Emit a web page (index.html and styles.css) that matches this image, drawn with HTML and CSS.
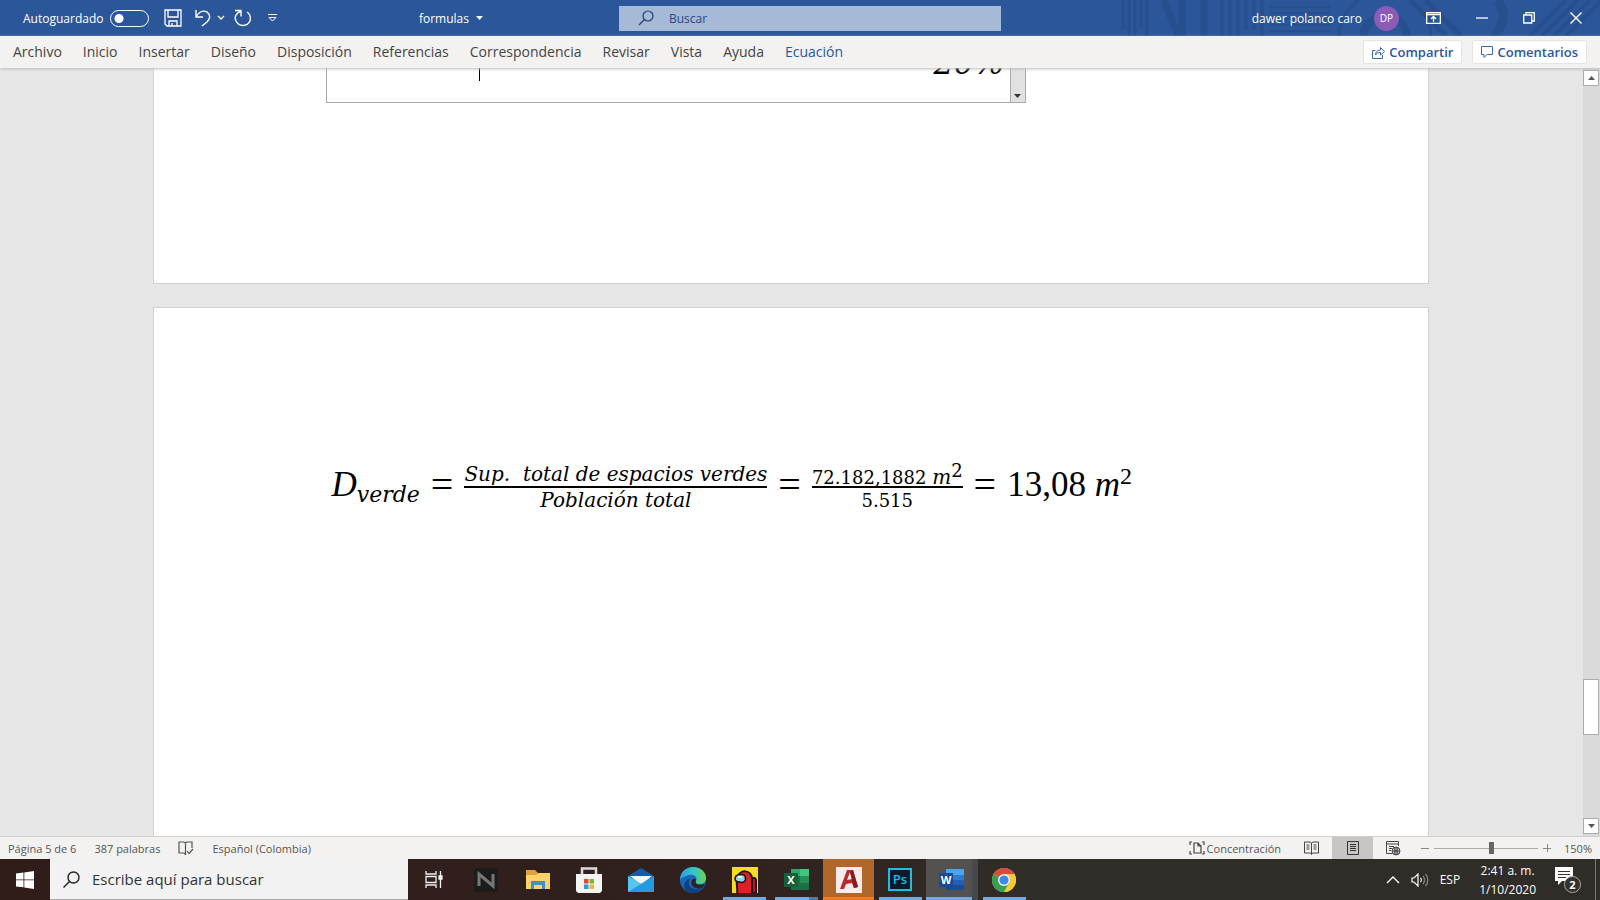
FILE: index.html
```html
<!DOCTYPE html>
<html lang="es">
<head>
  <meta charset="UTF-8">
  <meta name="viewport" content="width=device-width, initial-scale=1.0">
  <title>formulas - Word</title>
  <link rel="stylesheet" href="styles.css">
</head>
<body>
  <header class="titlebar">
    <svg class="titlebar-art" width="500" height="36" viewBox="0 0 500 36" fill="none" stroke="#264f8d" aria-hidden="true">
      <path stroke-width="3" d="M23 0v30M29 0v36M35 0v36M41 0v28M47 0v36M122 0v36M130 0v36M138 0v36M146 0v30M154 0v30M162 0v36"/>
      <path stroke-width="7" d="M64 0l14 36M82 0v36M104 0v36"/>
      <path stroke-width="2" d="M170 7h60M170 13h60M170 19h60M170 25h60M170 31h60"/>
      <circle cx="285" cy="38" r="22" stroke-width="8"/>
      <circle cx="285" cy="38" r="46" stroke-width="3"/>
      <path stroke-width="5" d="M310 0l36 36M325 0l36 36"/>
      <path stroke-width="9" d="M397 0c10 12 8 24-4 36"/>
      <path stroke-width="4" d="M430 36l36-36M442 36l36-36M454 36l36-36M466 36l36-36"/>
    </svg>
    <div class="quick">
      <label class="autosave">Autoguardado <input type="checkbox" class="switch"></label>
      <button class="icon-btn save" aria-label="Guardar">
        <svg width="18" height="18" viewBox="0 0 18 18" fill="none" stroke="#fff" stroke-width="1.3"><path d="M1 1h16v16H3l-2-2zM4 1v7h10V1M5 17v-5h8v5M8 17v-3"/></svg>
      </button>
      <button class="icon-btn undo" aria-label="Deshacer">
        <svg width="16" height="18" viewBox="0 0 16 18" fill="none" stroke="#fff" stroke-width="1.4"><path d="M1 1v7h7M1 8C4 3 8 1 12 3c4 3 3 7 0 10l-5 4"/></svg>
      </button>
      <button class="icon-btn" aria-label="Opciones de deshacer">
        <svg width="8" height="6" viewBox="0 0 8 6" fill="none" stroke="#fff" stroke-width="1.3"><path d="M1 1l3 3 3-3"/></svg>
      </button>
      <button class="icon-btn redo" aria-label="Rehacer">
        <svg width="18" height="18" viewBox="0 0 18 18" fill="none" stroke="#fff" stroke-width="1.4"><path d="M1 1.500h6v6M7 2C2 4 0 8 2 12c3 6 11 6 14 0 1-4 0-7-3-9"/></svg>
      </button>
      <button class="icon-btn more" aria-label="Personalizar barra">
        <svg width="9" height="8" viewBox="0 0 9 8" fill="none" stroke="#fff"><path d="M0 .5h9M1 3.500h7L4.500 7z"/></svg>
      </button>
      <button class="doc-name">formulas
        <svg width="7" height="4" viewBox="0 0 7 4" fill="#fff"><path d="M0 0h7L3.500 4z"/></svg>
      </button>
    </div>
    <label class="search">
      <svg width="16" height="16" viewBox="0 0 16 16" fill="none" stroke="#1f3f77" stroke-width="1.200"><circle cx="10" cy="6" r="5"/><path d="M6.500 9.500L1 15"/></svg>
      <input type="text" placeholder="Buscar" aria-label="Buscar">
    </label>
    <div class="window-tools">
      <span class="user">dawer polanco caro</span>
      <span class="avatar">DP</span>
      <button class="icon-btn" aria-label="Opciones de la cinta">
        <svg width="15" height="12" viewBox="0 0 15 12" fill="none" stroke="#fff" stroke-width="1.300"><path d="M.7.700h13.600v10.600H.7zM.7 2.500h13.600M7.500 10V4.500M5 7l2.500-2.500L10 7"/></svg>
      </button>
      <button class="icon-btn" aria-label="Minimizar">
        <svg width="12" height="12" viewBox="0 0 12 12" stroke="#fff" stroke-width="1.300"><path d="M0 6h12"/></svg>
      </button>
      <button class="icon-btn" aria-label="Restaurar">
        <svg width="12" height="12" viewBox="0 0 12 12" fill="none" stroke="#fff" stroke-width="1.300"><path d="M.7 3h8v8h-8zM3 3V.7h8.300V9H9"/></svg>
      </button>
      <button class="icon-btn" aria-label="Cerrar">
        <svg width="12" height="12" viewBox="0 0 12 12" stroke="#fff" stroke-width="1.400"><path d="M.5.500l11 11M11.500.500l-11 11"/></svg>
      </button>
    </div>
  </header>

  <nav class="ribbon">
    <a href="#">Archivo</a>
    <a href="#">Inicio</a>
    <a href="#">Insertar</a>
    <a href="#">Diseño</a>
    <a href="#">Disposición</a>
    <a href="#">Referencias</a>
    <a href="#">Correspondencia</a>
    <a href="#">Revisar</a>
    <a href="#">Vista</a>
    <a href="#">Ayuda</a>
    <a href="#" class="active">Ecuación</a>
    <div class="ribbon-actions">
      <button>
        <svg width="13" height="13" viewBox="0 0 13 13" fill="none" stroke="#3c66a8"><path d="M3.500 4.500h-3v8h10V9M3.500 9c0-3 2-5 5-5V1.500l4 4-4 3.500V6.500C6 6.500 5 7 3.500 9z"/></svg>
        Compartir
      </button>
      <button>
        <svg width="12" height="12" viewBox="0 0 12 12" fill="none" stroke="#3c66a8"><path d="M.5.500h11v8H6l-3 3v-3H.5z"/></svg>
        Comentarios
      </button>
    </div>
  </nav>

  <main class="workspace">
    <div class="pages">
      <section class="page page-end">
        <div class="equation-box">
          <span class="caret"></span>
          <span class="percent">20%</span>
          <button class="equation-menu" aria-label="Opciones de ecuación">
            <svg width="7" height="4" viewBox="0 0 7 4" fill="#333"><path d="M0 0h7L3.500 4z"/></svg>
          </button>
        </div>
      </section>
      <section class="page page-next">
        <div class="equation">
          <span class="term"><i>D</i><i class="sub">verde</i></span>
          <span class="equals">=</span>
          <span class="fraction">
            <span class="top"><i>Sup.&nbsp; total de espacios verdes</i></span>
            <span class="bottom"><i>Población total</i></span>
          </span>
          <span class="equals">=</span>
          <span class="fraction">
            <span class="top">72.182,1882 <i>m</i><span class="sup">2</span></span>
            <span class="bottom">5.515</span>
          </span>
          <span class="equals">=</span>
          <span class="term">13,08 <i>m</i><span class="sup">2</span></span>
        </div>
      </section>
    </div>
    <div class="scrollbar">
      <button aria-label="Subir"><svg width="7" height="4" viewBox="0 0 7 4" fill="#555"><path d="M0 4h7L3.500 0z"/></svg></button>
      <div class="track-above"></div>
      <div class="thumb"></div>
      <div class="track-below"></div>
      <button aria-label="Bajar"><svg width="7" height="4" viewBox="0 0 7 4" fill="#555"><path d="M0 0h7L3.500 4z"/></svg></button>
    </div>
  </main>

  <footer class="statusbar">
    <span>Página 5 de 6</span>
    <span>387 palabras</span>
    <svg width="16" height="14" viewBox="0 0 16 14" fill="none" stroke="#555" stroke-width="1.200"><path d="M7.500 2v11.500L6 12H1V1h5l1.500 1L9 1h5v6M9 10l2 2.500L15 8"/></svg>
    <span>Español (Colombia)</span>
    <div class="view-tools">
      <button class="focus-btn">
        <svg width="16" height="14" viewBox="0 0 16 14" fill="none" stroke="#444" stroke-width="1.200"><path d="M3 1H1v3M1 10v3h2M13 1h2v3M15 10v3h-2M5 2h4l3 3v7H5zM9 2v3h3"/></svg>
        Concentración
      </button>
      <button class="view-btn" aria-label="Modo de lectura">
        <svg width="15" height="14" viewBox="0 0 15 14" fill="none" stroke="#444"><path d="M7.500 2v11.500M7.500 2L6 1H.5v11H6l1.500 1L9 12h5.500V1H9zM2.500 4h3M2.500 6h3M2.500 8h3M9.500 4h3M9.500 6h3M9.500 8h3"/></svg>
      </button>
      <button class="view-btn selected" aria-label="Diseño de impresión">
        <svg width="12" height="14" viewBox="0 0 12 14" fill="none" stroke="#333"><path d="M.5.500h11v13H.5zM3 3.500h6M3 5.500h6M3 7.500h6M3 9.500h6"/></svg>
      </button>
      <button class="view-btn" aria-label="Diseño web">
        <svg width="15" height="15" viewBox="0 0 15 15" fill="none" stroke="#444"><path d="M6 12.500H.5V.5h12V5M.5 3h12M3 5.500h5M3 7.500h3M3 9.500h2"/><circle cx="10" cy="10" r="4" fill="#ccc"/><path d="M6 10h8M10 6v8M8 7c1 2 1 4 0 6M12 7c-1 2-1 4 0 6"/></svg>
      </button>
      <button class="zoom-btn" aria-label="Alejar"><svg width="8" height="8" viewBox="0 0 8 8" stroke="#888"><path d="M0 4.500h8"/></svg></button>
      <input type="range" class="zoom" min="0" max="100" value="56" aria-label="Zoom">
      <button class="zoom-btn" aria-label="Acercar"><svg width="8" height="8" viewBox="0 0 8 8" stroke="#888"><path d="M0 4.500h8M4.500 0v8"/></svg></button>
      <span class="zoom-value">150%</span>
    </div>
  </footer>

  <div class="taskbar">
    <button class="start" aria-label="Inicio">
      <svg width="18" height="18" viewBox="0 0 18 18" fill="#fff"><path d="M0 2.500l7.500-1v7H0zM8.300 1.400L18 0v8.500H8.300zM0 9.300h7.500v7L0 15.400zM8.300 9.300H18V18l-9.700-1.500z"/></svg>
    </button>
    <label class="task-search">
      <svg width="17" height="17" viewBox="0 0 17 17" fill="none" stroke="#222" stroke-width="1.400"><circle cx="10.500" cy="6.500" r="5.500"/><path d="M6.500 10.500L.5 16.500"/></svg>
      <input type="text" placeholder="Escribe aquí para buscar" aria-label="Escribe aquí para buscar">
    </label>
    <div class="apps">
      <button aria-label="Vista de tareas">
        <svg width="18" height="17" viewBox="0 0 18 17" fill="none" stroke="#eee" stroke-width="1.300"><path d="M1 0v3h10V0M1 17v-3h10v3M1 5.500h10v6H1zM15.500 0v17"/><path fill="#eee" d="M14 5h3v3h-3z"/></svg>
      </button>
      <button aria-label="Nox">
        <svg width="24" height="24" viewBox="0 0 24 24"><rect width="24" height="24" rx="3" fill="#1d1c1c"/><path d="M5 18V6l14 12V6" fill="none" stroke="#777" stroke-width="3"/></svg>
      </button>
      <button aria-label="Explorador de archivos">
        <svg width="24" height="22" viewBox="0 0 24 22"><path fill="#e0a136" d="M0 1h9l3 3h12v6H0z"/><path fill="#fbd267" d="M0 6h10l3-2h11v16H0z"/><path fill="#3f8ecd" d="M5 20v-8h14v8h-3v-4H8v4z"/></svg>
      </button>
      <button aria-label="Microsoft Store">
        <svg width="26" height="26" viewBox="0 0 26 26"><path d="M6 8V1.500h14V8" fill="none" stroke="#ddd" stroke-width="2.500"/><path fill="#f4f4f4" d="M0 7h26v17l-2 2H2l-2-2z"/><path fill="#d9512c" d="M8 12h4.500v4.500H8z"/><path fill="#7db72f" d="M13.500 12H18v4.500h-4.500z"/><path fill="#2a9ddb" d="M8 17.500h4.500V22H8z"/><path fill="#f0b82d" d="M13.500 17.500H18V22h-4.500z"/></svg>
      </button>
      <button aria-label="Correo">
        <svg width="26" height="24" viewBox="0 0 26 24"><path fill="#145ca7" d="M0 8L13 0l13 8-13 9z"/><path fill="#f2f8fc" d="M2 8h22L13 17z"/><path fill="#2d9fdf" d="M0 8l13 8 13-8v16H0z"/><path fill="#56c5f3" d="M0 8l26 16H0z"/><path fill="#249ae0" d="M0 24l26-16v16z"/></svg>
      </button>
      <button aria-label="Edge">
        <svg width="26" height="26" viewBox="0 0 26 26">
          <defs><linearGradient id="edge-top" x1="0" y1="0" x2="1" y2="0"><stop offset="0" stop-color="#2e9fe0"/><stop offset=".5" stop-color="#35c1cd"/><stop offset="1" stop-color="#67d650"/></linearGradient></defs>
          <circle cx="13" cy="13" r="13" fill="#1769b7"/>
          <path fill="url(#edge-top)" d="M0 13C0 5 6 0 13 0c8 0 13 5 13 11 0 4-3 6-6 6-3 0-5-1-4-3 3-5-5-8-10-5C3 10 1 11 0 13z"/>
          <path fill="#123f80" d="M10 12c-3 5 0 10 6 10 3 0 5-1 7-2-4 7-12 8-18 3-2-6 0-10 5-11z"/>
          <path fill="#302220" d="M16 13c-2 4 2 6 9 4-1 2-2 3-3 4-7 2-13-3-10-8 1-1 3-2 4 0z"/>
        </svg>
      </button>
      <button class="running" aria-label="Among Us">
        <svg width="26" height="26" viewBox="0 0 26 26"><path fill="#f5dc28" d="M0 0h26v26H0z"/><path fill="#b71920" stroke="#241017" stroke-width="2" d="M16 11h6q2 0 2 3v12h-8z"/><path fill="#df2028" stroke="#241017" stroke-width="2" d="M5 27c1-5-1-10 0-16 2-9 15-9 15 1v15z"/><path fill="#9ad2e5" stroke="#241017" stroke-width="1.600" d="M4 9c2-2 8-2 9 0 2 6-2 7-6 6-4 0-5-3-3-6z"/><path fill="#fff" d="M6 9h4v2H6z"/></svg>
      </button>
      <button class="running grouped" aria-label="Excel">
        <svg width="26" height="24" viewBox="0 0 26 24"><path fill="#1c7044" d="M7 1h18v21H7z"/><path fill="#2fa66a" d="M7 1h9v7H7z"/><path fill="#43c481" d="M16 1h9v7h-9z"/><path fill="#279057" d="M16 8h9v7h-9z"/><path fill="#146039" d="M0 5h14v14H0z"/><text x="7" y="16" class="tile-letter">X</text></svg>
      </button>
      <button class="running autocad" aria-label="AutoCAD">
        <svg width="26" height="26" viewBox="0 0 26 26"><path fill="#f8ece8" d="M0 0h26v26H0z"/><path fill="#b62a30" d="M4 22L11 3h6l5 17-4 1-2-5-6 1-2 5zM11 13l5-1-2-7z"/><path fill="#811c23" d="M14 5l3-2 5 17-4 1z"/></svg>
      </button>
      <button class="running" aria-label="Photoshop">
        <svg width="24" height="23" viewBox="0 0 24 23"><path fill="#071b2a" stroke="#20bce8" stroke-width="2" d="M1 1h22v21H1z"/><text x="12" y="16" class="ps-letters">Ps</text></svg>
      </button>
      <button class="running current" aria-label="Word">
        <svg width="26" height="24" viewBox="0 0 26 24"><path fill="#1a4c9c" d="M7 1h18v21H7z"/><path fill="#49a6ec" d="M7 1h18v6H7z"/><path fill="#2e7bd0" d="M7 7h18v5H7z"/><path fill="#225fb6" d="M7 12h18v5H7z"/><path fill="#194b98" d="M0 5h14v14H0z"/><text x="7" y="16" class="tile-letter">W</text></svg>
      </button>
      <button class="running" aria-label="Chrome">
        <svg width="24" height="24" viewBox="0 0 24 24"><circle cx="12" cy="12" r="12" fill="#f6c936"/><path fill="#d94b3d" d="M12 12L1.600 6A12 12 0 0 1 22.400 6z"/><path fill="#35a153" d="M12 12L1.600 6A12 12 0 0 0 12 24l5-9z"/><path fill="#f6c936" d="M12 6h10.400A12 12 0 0 1 12 24l5.500-9z"/><circle cx="12" cy="12" r="6" fill="#f4f4f4"/><circle cx="12" cy="12" r="4.600" fill="#4386e8"/></svg>
      </button>
    </div>
    <div class="tray">
      <button aria-label="Mostrar iconos ocultos"><svg width="14" height="9" viewBox="0 0 14 9" fill="none" stroke="#fff" stroke-width="1.400"><path d="M1 8l6-6 6 6"/></svg></button>
      <button aria-label="Volumen"><svg width="18" height="14" viewBox="0 0 18 14" fill="none" stroke="#fff" stroke-width="1.200"><path d="M1 5h2l4-4v12L3 9H1zM9.500 5c1 1 1 3 0 4"/><path stroke="#8b8985" d="M12 3c2 2 2 6 0 8M14.500 1c3 3 3 9 0 12"/></svg></button>
      <button>ESP</button>
      <time class="clock">2:41 a. m.<br>1/10/2020</time>
      <button class="notifications" aria-label="Notificaciones">
        <svg width="18" height="18" viewBox="0 0 18 18"><path fill="#fff" d="M0 0h18v14H7l-4 4v-4H0z"/><path stroke="#35302c" d="M3 4.500h12M3 7.500h12M3 10.500h8"/></svg>
        <span class="badge">2</span>
      </button>
    </div>
  </div>
</body>
</html>
```
FILE: styles.css
```css
* {
  box-sizing: border-box;
}
body {
  margin: 0;
  height: 100vh;
  display: flex;
  flex-direction: column;
  overflow: hidden;
  font-family: "Open Sans", "Noto Sans", sans-serif;
  font-size: 13px;
}
button {
  display: flex;
  align-items: center;
  justify-content: center;
  padding: 0;
  border: none;
  background: none;
  color: inherit;
  font: inherit;
}
svg {
  display: block;
  flex-shrink: 0;
}
input {
  font: inherit;
}

/* Title bar */
.titlebar {
  position: relative;
  flex: 0 0 36px;
  display: grid;
  grid-template-columns: 619fr 382fr 599fr;
  align-items: center;
  background: #2b579a;
  color: #fff;
  font-size: 12px;
}
.titlebar-art {
  position: absolute;
  top: 0;
  right: 0;
}
.quick {
  display: flex;
  align-items: center;
  padding-left: 23px;
}
.autosave {
  display: flex;
  align-items: center;
  gap: 7px;
}
.switch {
  appearance: none;
  width: 39px;
  height: 17px;
  margin: 0;
  border: 1px solid #fff;
  border-radius: 9px;
  background: radial-gradient(circle at 8px 50%, #fff 4px, transparent 5px);
}
.save {
  margin-left: 15px;
}
.undo {
  margin: 0 6px 0 13px;
}
.redo {
  margin-left: 9px;
}
.more {
  margin-left: 16px;
}
.doc-name {
  gap: 7px;
  margin-left: auto;
  margin-right: 136px;
}
.search {
  display: flex;
  align-items: center;
  gap: 15px;
  height: 25px;
  padding-left: 19px;
  background: #a6b9d7;
}
.search input {
  flex: 1;
  min-width: 0;
  padding: 0;
  border: none;
  background: none;
}
.search input::placeholder {
  color: #254a86;
}
.window-tools {
  position: relative;
  display: flex;
  align-items: center;
  justify-content: flex-end;
  gap: 35px;
  padding-right: 18px;
}
.user {
  margin-right: -23px;
}
.avatar {
  width: 25px;
  height: 25px;
  margin-right: -8px;
  border-radius: 50%;
  background: #8a5cb8;
  font-size: 10px;
  line-height: 25px;
  text-align: center;
}

/* Ribbon tabs */
.ribbon {
  position: relative;
  z-index: 1;
  flex: 0 0 32px;
  display: flex;
  align-items: center;
  gap: 21px;
  padding: 0 13px;
  background: #f3f2f1;
  box-shadow: 0 1px 3px #bbb;
  color: #444;
}
.ribbon a {
  color: inherit;
  font-size: 14px;
  line-height: 18px;
  text-decoration: none;
}
.ribbon .active {
  color: #2b579a;
}
.ribbon-actions {
  display: flex;
  gap: 10px;
  margin-left: auto;
}
.ribbon-actions button {
  gap: 4px;
  height: 24px;
  padding: 0 8px;
  border: 1px solid #e6e4e2;
  border-radius: 2px;
  background: #fff;
  color: #2b579a;
  font-weight: 600;
}

/* Document */
.workspace {
  flex: 1;
  min-height: 0;
  display: flex;
  background: #e6e6e6;
}
.pages {
  flex: 1;
  min-width: 0;
  display: flex;
  flex-direction: column;
  gap: 23px;
  padding-right: 2px;
  overflow: hidden;
}
.page {
  width: 1276px;
  max-width: 90%;
  margin: 0 auto;
  padding: 0 172px;
  border: 1px solid #d2d2d2;
  background: #fff;
  color: #000;
}
.page-end {
  padding-bottom: 180px;
  border-top: none;
}
.page-next {
  flex: 1;
  padding-top: 148px;
  border-bottom: none;
}
.equation-box {
  display: flex;
  align-items: flex-end;
  width: 700px;
  height: 35px;
  overflow: hidden;
  border: 1px solid #aaa;
  border-top: none;
}
.caret {
  align-self: flex-start;
  width: 1px;
  height: 13px;
  margin-left: 152px;
  background: #000;
}
.percent {
  margin: 0 5px 19px auto;
  font: italic 32px/40px "DejaVu Serif", serif;
}
.equation-menu {
  align-self: stretch;
  align-items: flex-end;
  width: 15px;
  padding-bottom: 4px;
  border-left: 1px solid #aaa;
  background: #e1e1e1;
}
.equation {
  display: flex;
  align-items: center;
  gap: 11px;
  padding-left: 6px;
  font: 35px/48px "Liberation Serif", serif;
  white-space: nowrap;
}
.equals {
  font-size: 40px;
}
.sub {
  font-family: "DejaVu Serif", serif;
  font-size: 22px;
  line-height: 1;
  vertical-align: -6px;
}
.sup {
  font-size: 24px;
  line-height: 1;
  vertical-align: 12px;
}
.fraction {
  display: flex;
  flex-direction: column;
  align-items: center;
  padding-top: 6px;
  font: 18px/25px "DejaVu Serif", serif;
}
.fraction i {
  font-size: 20px;
}
.fraction .top {
  height: 26px;
  border-bottom: 2px solid #000;
}
.fraction .sup {
  font-size: 18px;
  vertical-align: 7px;
}

/* Vertical scrollbar */
.scrollbar {
  flex: 0 0 17px;
  display: flex;
  flex-direction: column;
  padding: 2px 1px 2px 0;
  background: #dadada;
}
.scrollbar button {
  height: 16px;
  border: 1px solid #ababab;
  background: #fff;
}
.thumb {
  height: 56px;
  border: 1px solid #ababab;
  background: #fff;
}
.track-above {
  flex: 877;
}
.track-below {
  flex: 123;
}

/* Status bar */
.statusbar {
  flex: 0 0 23px;
  display: flex;
  align-items: center;
  gap: 18px;
  padding: 0 8px;
  border-top: 1px solid #d0d0d0;
  background: #f3f2f1;
  color: #555;
  font-size: 11px;
}
.view-tools {
  display: flex;
  align-items: center;
  align-self: stretch;
  margin-left: auto;
}
.focus-btn {
  gap: 2px;
  margin-right: 10px;
}
.view-btn {
  align-self: stretch;
  width: 41px;
}
.view-btn.selected {
  background: #c8c6c4;
}
.zoom-btn {
  width: 8px;
}
.view-btn + .zoom-btn {
  margin-left: 7px;
}
.zoom {
  appearance: none;
  width: 104px;
  height: 12px;
  margin: 0 5px;
  background: linear-gradient(#aaa, #aaa) center / 100% 1px no-repeat;
}
.zoom::-webkit-slider-thumb {
  appearance: none;
  width: 5px;
  height: 12px;
  background: #666;
}
.zoom-value {
  margin-left: 13px;
}

/* Taskbar */
.taskbar {
  flex: 0 0 41px;
  display: flex;
  align-items: stretch;
  background: linear-gradient(90deg, #301c18, #30211e 45%, #302d29 65%, #302d29);
  color: #fff;
}
.start {
  width: 50px;
}
.task-search {
  display: flex;
  align-items: center;
  gap: 12px;
  width: 358px;
  padding-left: 13px;
  border-bottom: 1px solid #aaa;
  background: #f2f2f2;
}
.task-search input {
  flex: 1;
  min-width: 0;
  padding: 0;
  border: none;
  background: none;
  font-size: 15px;
}
.task-search input::placeholder {
  color: #333;
}
.apps {
  display: grid;
  grid-template-columns: repeat(12, 1fr);
  width: 622px;
}
.running {
  background: linear-gradient(#76a9dc, #76a9dc) center bottom / 43px 3px no-repeat;
}
.grouped {
  background: linear-gradient(90deg, #76a9dc 34px, #56799c 34px) center bottom / 43px 3px no-repeat;
}
.autocad {
  background: linear-gradient(#b2672a 38px, #f47b1c 38px);
}
.current {
  background: linear-gradient(90deg, transparent 46px, #45494c 46px), linear-gradient(#545251 38px, #76a9dc 38px);
}
.tile-letter {
  fill: #fff;
  font-size: 11px;
  font-weight: 700;
  text-anchor: middle;
}
.ps-letters {
  fill: #20bce8;
  font-size: 13px;
  font-weight: 600;
  text-anchor: middle;
}
.tray {
  display: flex;
  align-items: center;
  gap: 11px;
  margin-left: auto;
  margin-right: 4px;
  padding-right: 14px;
  border-right: 1px solid #777;
  font-size: 12px;
}
.clock {
  margin: 0 8px;
  line-height: 19px;
  text-align: center;
}
.notifications {
  position: relative;
  width: 26px;
  height: 26px;
  justify-content: flex-start;
  align-items: flex-start;
}
.badge {
  position: absolute;
  right: 0;
  bottom: 0;
  width: 17px;
  height: 17px;
  border: 1px solid #aaa;
  border-radius: 50%;
  background: #35302c;
  font-size: 11px;
  font-weight: 700;
  line-height: 15px;
  text-align: center;
}
```
